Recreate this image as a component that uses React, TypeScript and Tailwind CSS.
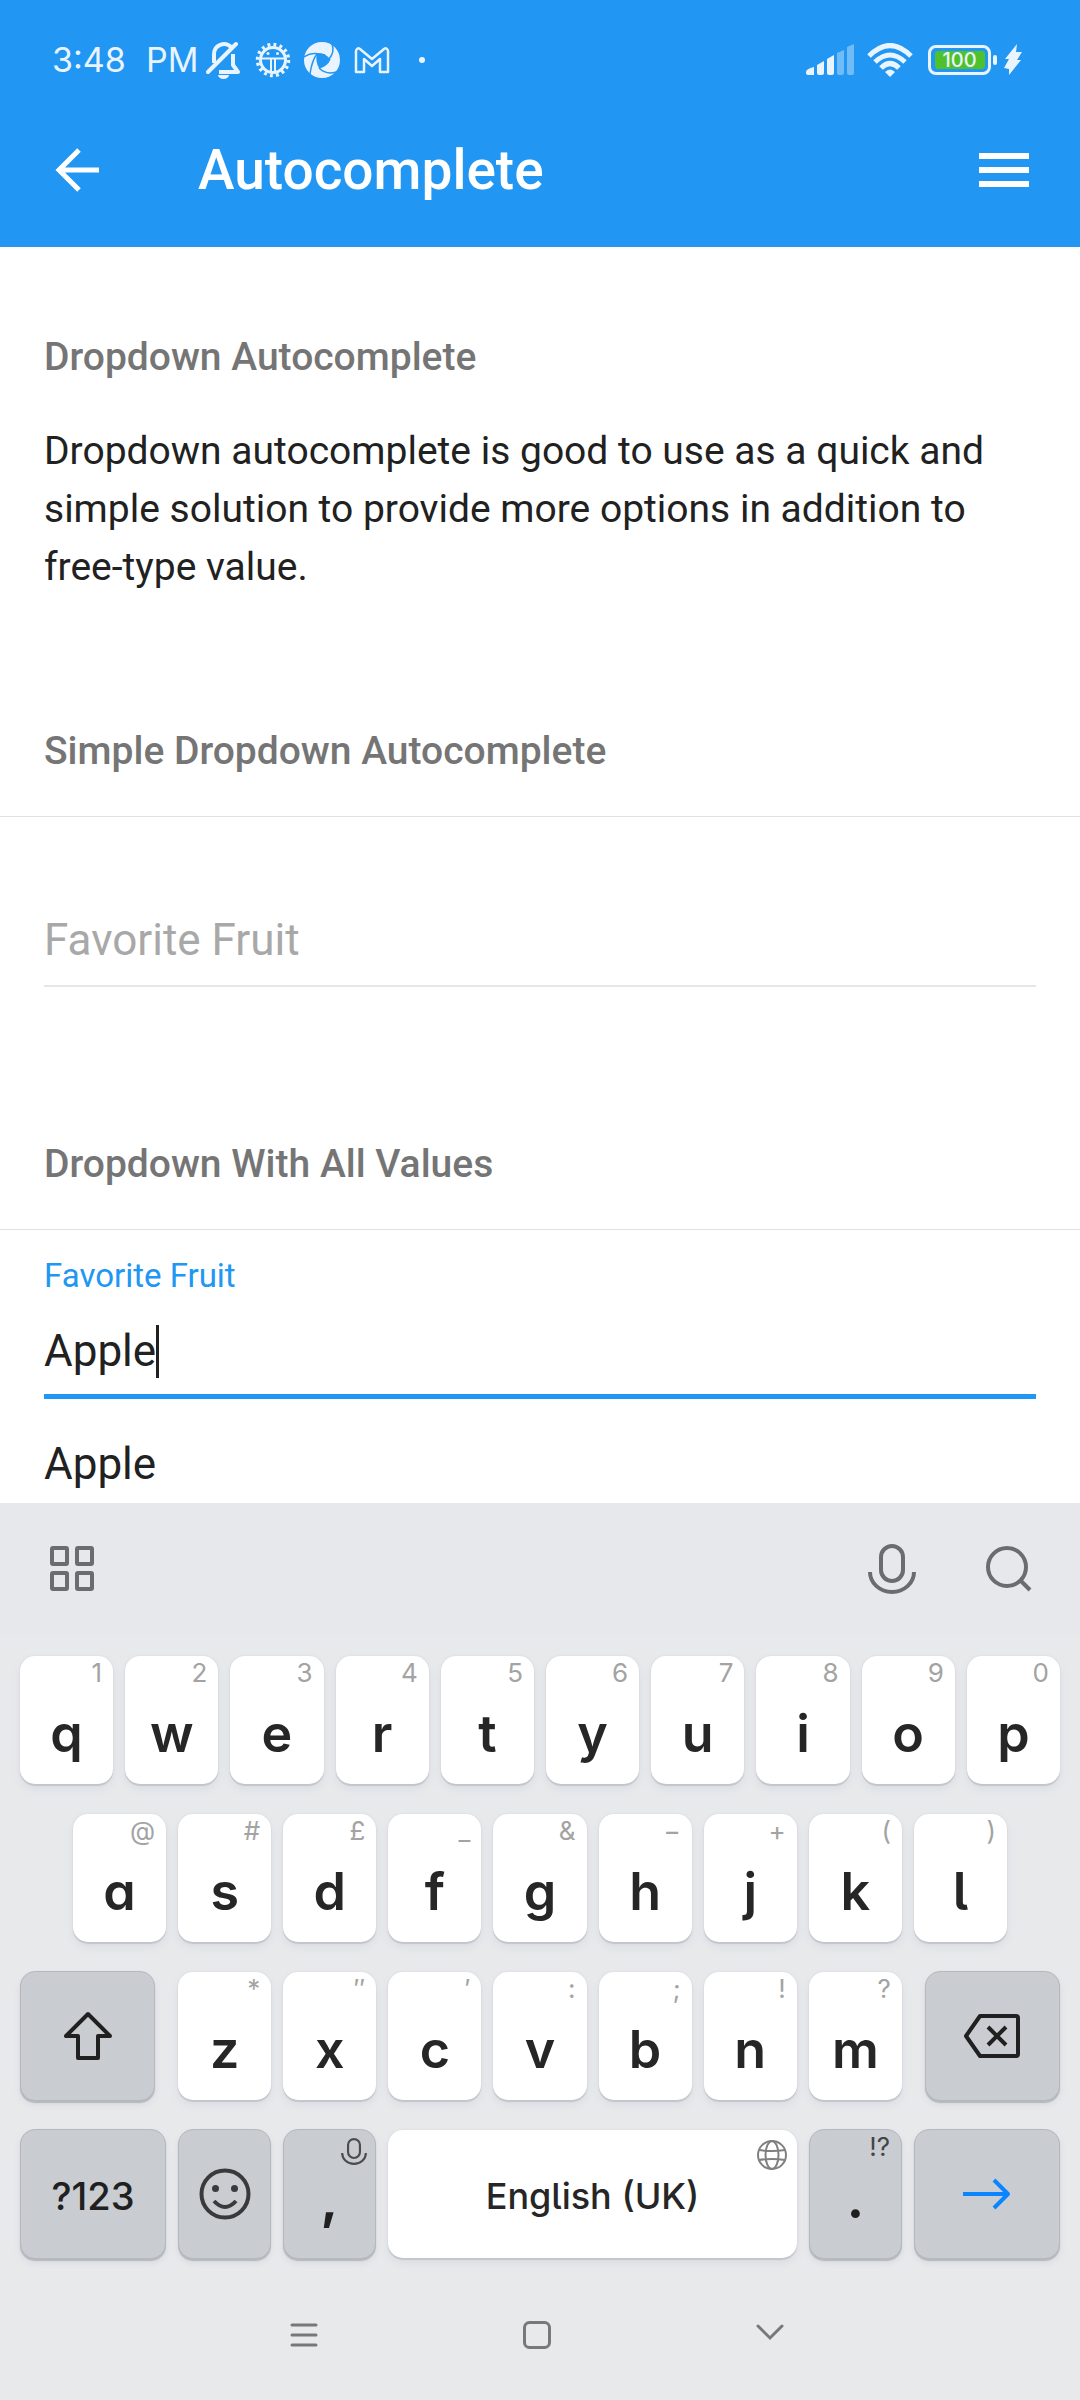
import type { ReactNode } from "react";

function StatusBar() {
  return (
    <div className="flex h-[120px] items-center justify-between pl-[52px] pr-[58px] font-[Inter,sans-serif] text-[#e9f4fe]">
      <div className="flex items-center">
        <span className="w-[94px] text-[34px] leading-[40px]">3:48</span>
        <span className="w-[60px] text-[34px] leading-[40px]">PM</span>
        <svg className="h-[38px] w-[36px]" viewBox="206 42 36 38" fill="none" stroke="currentColor" strokeWidth="4">
          <path d="M214 64V55a10 10 0 0 1 17-7" />
          <path d="M208 73 236 45" strokeLinecap="round" />
          <path d="M219 73H238L233 66V55" strokeLinejoin="round" />
          <path d="M218 76h11a5.5 4 0 0 1 -11 0Z" fill="currentColor" stroke="none" />
        </svg>
        <svg className="ml-[13px] h-[36px] w-[36px]" viewBox="-18 -18 36 36" fill="none" stroke="currentColor">
          <circle r="15.5" strokeWidth="3.5" strokeDasharray="2.9 3.188" />
          <circle r="12.5" strokeWidth="3" />
          <path d="M-12-1.5H12M-2-1V12M2-1V12" strokeWidth="2" />
          <circle cx="-5" cy="-6.5" r="1.5" fill="currentColor" stroke="none" />
          <circle cx="4.5" cy="-6.5" r="1.5" fill="currentColor" stroke="none" />
        </svg>
        <svg className="ml-[13px] h-[36px] w-[36px]" viewBox="-18 -18 36 36">
          <circle r="18" fill="currentColor" />
          <path d="M-5-6Q2-8 8-1Q4 6-3 8Q-7 1-5-6Z" fill="#2196f3" />
          <g fill="none" stroke="#2196f3" strokeWidth="1.5">
            <path d="M-18-3Q-10-9 3-5" />
            <path d="M10-16Q13-8 7-1" />
            <path d="M17 11Q5 16-3 8" />
            <path d="M8-1Q5 6-3 8" />
            <path d="M-12 14Q-10 0-5-6" />
          </g>
        </svg>
        <svg className="ml-[14px] h-[28px] w-[36px]" viewBox="355 45 36 28" fill="none" stroke="currentColor" strokeWidth="2.5" strokeLinejoin="round">
          <path d="M357 71V50Q358 46 361 48L373 58 385 48Q388 46 389 50V71H381V58L373 65 365 58V71Z" />
        </svg>
        <span className="ml-[29px] size-[6px] rounded-full bg-current" />
      </div>
      <div className="flex items-center">
        <svg className="h-[32px] w-[48px]" viewBox="806 45 48 32" fill="currentColor">
          <path d="M806 73q0-3 8-5v8h-6q-2 0-2-2Z" />
          <path d="M817 66 824 62V74q0 2-2 2h-3q-2 0-2-2Z" />
          <path d="M827 60 834 56V74q0 2-2 2h-3q-2 0-2-2Z" />
          <path d="M837 54 844 51V74q0 2-2 2h-3q-2 0-2-2Z" opacity=".4" />
          <path d="M847 48 854 45V74q0 2-2 2h-3q-2 0-2-2Z" opacity=".4" />
        </svg>
        <svg className="ml-[13px] h-[34px] w-[46px]" viewBox="867 43 46 34" fill="none" stroke="currentColor" strokeWidth="5">
          <path d="M869 56Q890 35 911 56M875 62Q890 48 905 62M881 68Q890 59 899 68" />
          <path d="M885 72Q890 67 895 72L890 77Z" fill="currentColor" stroke="none" />
        </svg>
        <div className="ml-[15px] flex h-[30px] w-[63px] items-center justify-center rounded-[8px] border-3 border-current">
          <span className="flex h-[18px] w-[50px] items-center justify-center rounded-[3px] bg-[#4fc12c] text-[20px] leading-[18px] font-medium">100</span>
        </div>
        <span className="ml-[2px] h-[10px] w-[4px] rounded-[2px] bg-current" />
        <svg className="ml-[7px] h-[32px] w-[18px]" viewBox="0 0 18 32" fill="currentColor">
          <path d="M13 0 1 15H5L0 24 5 25V31L17 16H13L18 8H12Z" />
        </svg>
      </div>
    </div>
  );
}

function Header() {
  return (
    <header className="h-[247px] bg-[#2196f3] text-white">
      <StatusBar />
      <div className="flex h-[100px] items-center pl-[55px] pr-[51px]">
        <button type="button" aria-label="Back">
          <svg className="h-[44px] w-[44px]" viewBox="0 0 44 44" fill="none" stroke="currentColor" strokeWidth="5">
            <path d="M44 22H4M24 2 4 22 24 42" />
          </svg>
        </button>
        <h1 className="ml-[99px] flex-1 text-[55px] leading-[64px] font-medium">Autocomplete</h1>
        <button type="button" aria-label="Menu">
          <svg className="h-[50px] w-[50px]" viewBox="0 0 50 50" fill="currentColor">
            <path d="M0 8h50v6H0ZM0 22h50v6H0ZM0 36h50v6H0Z" />
          </svg>
        </button>
      </div>
    </header>
  );
}

function BlockTitle({ children }: { children: ReactNode }) {
  return <h2 className="px-[44px] text-[39px] leading-[44px] font-medium text-[#757575]">{children}</h2>;
}

function Key({ label, hint }: { label: string; hint: string }) {
  return (
    <button type="button" aria-label={label} className="relative my-px h-[128px] rounded-[15px] bg-white pt-[28px] text-[52px] leading-[100px] font-semibold text-[#262626] shadow-[0_2px_1px_#c3c5cb,0_0_2px_#d3d5da,0_5px_8px_#dadce3]">
      {label}
      <span className="absolute top-[3px] right-[11px] text-[26px] leading-[28px] font-normal text-[#a3a3a3]">{hint}</span>
    </button>
  );
}

function GreyKey({ label, children }: { label: string; children: ReactNode }) {
  return (
    <button type="button" aria-label={label} className="relative flex h-[130px] items-center justify-center rounded-[15px] border border-[#b5b8be] bg-[#c9ccd1] text-[#202020] shadow-[0_2px_1px_#b5b8bd,0_4px_6px_#d8dae1]">
      {children}
    </button>
  );
}

const topRow = [["q", "1"], ["w", "2"], ["e", "3"], ["r", "4"], ["t", "5"], ["y", "6"], ["u", "7"], ["i", "8"], ["o", "9"], ["p", "0"]];
const homeRow = [["a", "@"], ["s", "#"], ["d", "£"], ["f", "_"], ["g", "&"], ["h", "−"], ["j", "+"], ["k", "("], ["l", ")"]];
const bottomRow = [["z", "*"], ["x", "″"], ["c", "′"], ["v", ":"], ["b", ";"], ["n", "!"], ["m", "?"]];

function Mic({ className }: { className: string }) {
  return (
    <svg className={className} viewBox="0 0 48 50" fill="none" stroke="currentColor" strokeWidth="4">
      <rect x="13" y="2" width="22" height="35" rx="11" />
      <path d="M2 28A22 20 0 0 0 46 28" />
    </svg>
  );
}

function Keyboard() {
  return (
    <section aria-label="Keyboard" className="flex-1 bg-[#e8e9eb] font-[Inter,sans-serif] [font-feature-settings:'cv11','cv05']">
      <div className="flex h-[131px] items-center bg-[#e7e8ec] pl-[50px] pr-[48px] text-[#6b6c6d]">
        <button type="button" aria-label="Keyboard tools" className="mr-auto">
          <svg className="h-[46px] w-[44px]" viewBox="0 0 44 46" fill="none" stroke="currentColor" strokeWidth="4">
            <rect x="2" y="2" width="15" height="16" rx="1" />
            <rect x="27" y="2" width="15" height="16" rx="1" />
            <rect x="2" y="27" width="15" height="16" rx="1" />
            <rect x="27" y="27" width="15" height="16" rx="1" />
          </svg>
        </button>
        <button type="button" aria-label="Voice input">
          <Mic className="h-[50px] w-[48px]" />
        </button>
        <button type="button" aria-label="Search" className="ml-[70px]">
          <svg className="h-[46px] w-[46px]" viewBox="0 0 46 46" fill="none" stroke="currentColor" strokeWidth="4">
            <circle cx="21" cy="21" r="19" />
            <path d="M34 34 44 44" />
          </svg>
        </button>
      </div>
      <div className="flex flex-col gap-[28px] px-[20px] pt-[21px]">
        <div className="grid grid-cols-10 gap-[12px]">
          {topRow.map(([label, hint]) => <Key key={label} label={label} hint={hint} />)}
        </div>
        <div className="grid grid-cols-9 gap-[12px] px-[53px]">
          {homeRow.map(([label, hint]) => <Key key={label} label={label} hint={hint} />)}
        </div>
        <div className="grid grid-cols-[135fr_723fr_135fr] gap-[23px]">
          <GreyKey label="Shift">
            <svg className="h-[50px] w-[48px]" viewBox="0 0 48 50" fill="none" stroke="currentColor" strokeWidth="4" strokeLinejoin="round">
              <path d="M24 3 2 25H14V47H34V25H46Z" />
            </svg>
          </GreyKey>
          <div className="grid grid-cols-7 gap-[12px]">
            {bottomRow.map(([label, hint]) => <Key key={label} label={label} hint={hint} />)}
          </div>
          <GreyKey label="Backspace">
            <svg className="h-[44px] w-[58px]" viewBox="0 0 58 44" fill="none" stroke="currentColor" strokeWidth="4" strokeLinejoin="round">
              <path d="M17 2H53Q55 2 55 4V40Q55 42 53 42H17L3 22Z" />
              <path d="M25 13 43 31M43 13 25 31" />
            </svg>
          </GreyKey>
        </div>
        <div className="grid grid-cols-[146fr_93fr_93fr_409fr_93fr_146fr] gap-[12px]">
          <GreyKey label="Symbols">
            <span className="pt-[4px] text-[38px] leading-[44px] font-medium">?123</span>
          </GreyKey>
          <GreyKey label="Emoji">
            <svg className="h-[52px] w-[52px]" viewBox="0 0 52 52" fill="none" stroke="#393a3b" strokeWidth="4">
              <circle cx="26" cy="26" r="23.5" />
              <path d="M15 33Q26 45 37 33" />
              <circle cx="16.5" cy="20.5" r="3.5" fill="#393a3b" stroke="none" />
              <circle cx="35.5" cy="20.5" r="3.5" fill="#393a3b" stroke="none" />
            </svg>
          </GreyKey>
          <GreyKey label="Comma">
            <span className="pt-[12px] text-[52px] leading-[60px] font-bold">,</span>
            <Mic className="absolute top-[8px] right-[8px] h-[27px] w-[26px] text-[#4b4c4e]" />
          </GreyKey>
          <button type="button" className="relative my-px h-[128px] rounded-[15px] bg-white pt-[4px] text-[36px] font-medium text-[#262626] shadow-[0_2px_1px_#c3c5cb,0_0_2px_#d3d5da,0_5px_8px_#dadce3]">
            English (UK)
            <svg className="absolute top-[10px] right-[10px] h-[30px] w-[30px]" viewBox="0 0 30 30" fill="none" stroke="#808080" strokeWidth="2">
              <circle cx="15" cy="15" r="14" />
              <ellipse cx="15" cy="15" rx="6.5" ry="14" />
              <path d="M2 10Q15 12 28 10M2 20Q15 18 28 20" />
            </svg>
          </button>
          <GreyKey label="Full stop">
            <span className="pt-[12px] text-[52px] leading-[60px] font-bold">.</span>
            <span className="absolute top-[3px] right-[11px] text-[26px] leading-[28px] text-[#434446]">!?</span>
          </GreyKey>
          <GreyKey label="Next">
            <svg className="h-[32px] w-[48px]" viewBox="0 0 48 32" fill="none" stroke="#0a84ff" strokeWidth="4" strokeLinejoin="round">
              <path d="M0 16H45M31 2 45 16 31 30" />
            </svg>
          </GreyKey>
        </div>
      </div>
      <nav className="mt-[62px] flex items-center justify-around pr-[193px] pl-[187px] text-[#77787a]">
        <button type="button" aria-label="Recent apps">
          <svg className="h-[28px] w-[28px]" viewBox="0 0 28 28" fill="none" stroke="currentColor" strokeWidth="3" strokeLinecap="round">
            <path d="M2 4H26M2 14H26M2 24H26" />
          </svg>
        </button>
        <button type="button" aria-label="Home">
          <svg className="h-[28px] w-[28px]" viewBox="0 0 28 28" fill="none" stroke="currentColor" strokeWidth="3">
            <rect x="1.5" y="1.5" width="25" height="25" rx="5" />
          </svg>
        </button>
        <button type="button" aria-label="Hide keyboard">
          <svg className="h-[28px] w-[28px]" viewBox="0 0 28 28" fill="none" stroke="currentColor" strokeWidth="3" strokeLinecap="round">
            <path d="M2 5 14 17 26 5" />
          </svg>
        </button>
      </nav>
    </section>
  );
}

export default function App() {
  return (
    <div className="flex min-h-screen flex-col bg-white font-[Roboto,sans-serif] text-[#212121]">
      <Header />
      <main>
        <div className="pt-[88px]">
          <BlockTitle>Dropdown Autocomplete</BlockTitle>
        </div>
        <p className="mt-[43px] px-[44px] text-[39px] leading-[58px]">
          Dropdown autocomplete is good to use as a quick and simple solution to provide more options in addition to free-type value.
        </p>
        <div className="mt-[133px] border-b border-[#e1e1e1] pb-[43px]">
          <BlockTitle>Simple Dropdown Autocomplete</BlockTitle>
        </div>
        <div className="px-[44px] pt-[92px]">
          <input
            type="text"
            aria-label="Favorite Fruit"
            placeholder="Favorite Fruit"
            className="block h-[78px] w-full border-b-2 border-[#e6e6e6] pb-[14px] text-[44px] outline-none placeholder:text-[#a8a8a8]"
          />
        </div>
        <div className="mt-[155px] border-b border-[#e1e1e1] pb-[43px]">
          <BlockTitle>Dropdown With All Values</BlockTitle>
        </div>
        <div className="px-[44px] pt-[26px]">
          <label htmlFor="fruit" className="block text-[33px] leading-[40px] text-[#2196f3]">Favorite Fruit</label>
          <div className="relative mt-[25px]">
            <input
              id="fruit"
              type="text"
              defaultValue="Apple"
              className="block h-[78px] w-full border-b-5 border-[#2196f3] pb-[13px] text-[44px] outline-none"
            />
            <span className="absolute top-[4px] left-[112px] h-[53px] w-[3px] bg-[#212121]" />
          </div>
          <ul className="pt-[39px] pb-[13px] text-[44px] leading-[52px]">
            <li>Apple</li>
          </ul>
        </div>
      </main>
      <Keyboard />
    </div>
  );
}
